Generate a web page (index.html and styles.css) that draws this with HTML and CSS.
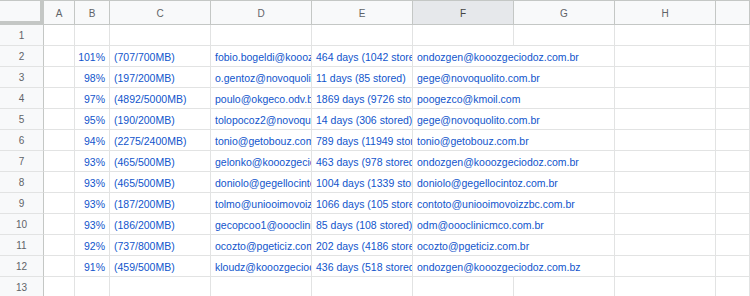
FILE: index.html
```html
<!DOCTYPE html>
<html lang="en">
<head>
  <meta charset="UTF-8" />
  <meta name="viewport" content="width=device-width, initial-scale=1.0" />
  <title>Storage usage</title>
  <link rel="stylesheet" href="styles.css">
</head>
<body>
  <div class="sheet">
    <!-- column headers -->
    <div class="corner"></div>
    <div class="col-head">A</div>
    <div class="col-head">B</div>
    <div class="col-head">C</div>
    <div class="col-head">D</div>
    <div class="col-head">E</div>
    <div class="col-head sel">F</div>
    <div class="col-head">G</div>
    <div class="col-head">H</div>
    <div class="col-head"></div>

    <!-- row 1 -->
    <div class="row-head">1</div>
    <div class="cell"></div><div class="cell"></div><div class="cell"></div><div class="cell"></div>
    <div class="cell"></div><div class="cell"></div><div class="cell"></div><div class="cell"></div><div class="cell"></div>

    <div class="row-head">2</div>
    <div class="cell"></div>
    <div class="cell num">101%</div>
    <div class="cell">(707/700MB)</div>
    <div class="cell">fobio.bogeldi@kooozgeciodoz.com.br</div>
    <div class="cell">464 days (1042 stored)</div>
    <div class="cell wide">ondozgen@kooozgeciodoz.com.br</div>
    <div class="cell"></div><div class="cell"></div>

    <div class="row-head">3</div>
    <div class="cell"></div>
    <div class="cell num">98%</div>
    <div class="cell">(197/200MB)</div>
    <div class="cell">o.gentoz@novoquolito.com.br</div>
    <div class="cell">11 days (85 stored)</div>
    <div class="cell wide">gege@novoquolito.com.br</div>
    <div class="cell"></div><div class="cell"></div>

    <div class="row-head">4</div>
    <div class="cell"></div>
    <div class="cell num">97%</div>
    <div class="cell">(4892/5000MB)</div>
    <div class="cell">poulo@okgeco.odv.br</div>
    <div class="cell">1869 days (9726 stored)</div>
    <div class="cell wide">poogezco@kmoil.com</div>
    <div class="cell"></div><div class="cell"></div>

    <div class="row-head">5</div>
    <div class="cell"></div>
    <div class="cell num">95%</div>
    <div class="cell">(190/200MB)</div>
    <div class="cell">tolopocoz2@novoquolito.com.br</div>
    <div class="cell">14 days (306 stored)</div>
    <div class="cell wide">gege@novoquolito.com.br</div>
    <div class="cell"></div><div class="cell"></div>

    <div class="row-head">6</div>
    <div class="cell"></div>
    <div class="cell num">94%</div>
    <div class="cell">(2275/2400MB)</div>
    <div class="cell">tonio@getobouz.com.br</div>
    <div class="cell">789 days (11949 stored)</div>
    <div class="cell wide">tonio@getobouz.com.br</div>
    <div class="cell"></div><div class="cell"></div>

    <div class="row-head">7</div>
    <div class="cell"></div>
    <div class="cell num">93%</div>
    <div class="cell">(465/500MB)</div>
    <div class="cell">gelonko@kooozgeciodoz.com.br</div>
    <div class="cell">463 days (978 stored)</div>
    <div class="cell wide">ondozgen@kooozgeciodoz.com.br</div>
    <div class="cell"></div><div class="cell"></div>

    <div class="row-head">8</div>
    <div class="cell"></div>
    <div class="cell num">93%</div>
    <div class="cell">(465/500MB)</div>
    <div class="cell">doniolo@gegellocintoz.com.br</div>
    <div class="cell">1004 days (1339 stored)</div>
    <div class="cell wide">doniolo@gegellocintoz.com.br</div>
    <div class="cell"></div><div class="cell"></div>

    <div class="row-head">9</div>
    <div class="cell"></div>
    <div class="cell num">93%</div>
    <div class="cell">(187/200MB)</div>
    <div class="cell">tolmo@uniooimovoizzbc.com.br</div>
    <div class="cell">1066 days (105 stored)</div>
    <div class="cell wide">contoto@uniooimovoizzbc.com.br</div>
    <div class="cell"></div><div class="cell"></div>

    <div class="row-head">10</div>
    <div class="cell"></div>
    <div class="cell num">93%</div>
    <div class="cell">(186/200MB)</div>
    <div class="cell">gecopcoo1@oooclinicmco.com.br</div>
    <div class="cell">85 days (108 stored)</div>
    <div class="cell wide">odm@oooclinicmco.com.br</div>
    <div class="cell"></div><div class="cell"></div>

    <div class="row-head">11</div>
    <div class="cell"></div>
    <div class="cell num">92%</div>
    <div class="cell">(737/800MB)</div>
    <div class="cell">ocozto@pgeticiz.com.br</div>
    <div class="cell">202 days (4186 stored)</div>
    <div class="cell wide">ocozto@pgeticiz.com.br</div>
    <div class="cell"></div><div class="cell"></div>

    <div class="row-head">12</div>
    <div class="cell"></div>
    <div class="cell num">91%</div>
    <div class="cell">(459/500MB)</div>
    <div class="cell">kloudz@kooozgeciodoz.com.br</div>
    <div class="cell">436 days (518 stored)</div>
    <div class="cell wide">ondozgen@kooozgeciodoz.com.bz</div>
    <div class="cell"></div><div class="cell"></div>

    <div class="row-head">13</div>
    <div class="cell"></div><div class="cell"></div><div class="cell"></div><div class="cell"></div>
    <div class="cell"></div><div class="cell"></div><div class="cell"></div><div class="cell"></div><div class="cell"></div>
  </div>
</body>
</html>
```

FILE: styles.css
```css
body { margin: 0; background: #fff; font-family: "Liberation Sans", Arial, sans-serif; overflow: hidden; }
.sheet { display: grid; grid-template-columns: 44px 31px 35px repeat(6, 101px) 1fr; grid-template-rows: 25px; grid-auto-rows: 21px; width: 750px; }
.sheet > div { box-sizing: border-box; overflow: hidden; white-space: nowrap; }
.corner { background: #f8f9fa; border-top: 1px solid #c4c7c5; border-right: 4px solid #c4c7c5; border-bottom: 4px solid #c4c7c5; }
.col-head { background: #f8f9fa; color: #5f6368; font-size: 10px; display: flex; align-items: center; justify-content: center; border-top: 1px solid #c4c7c5; border-right: 1px solid #c4c7c5; border-bottom: 1px solid #c4c7c5; padding-top: 1px; }
.col-head.sel { background: #e6e8eb; color: #444; }
.row-head { background: #f8f9fa; color: #5f6368; font-size: 10px; display: flex; align-items: center; justify-content: center; border-right: 1px solid #c4c7c5; border-bottom: 1px solid #e2e3e3; padding-top: 1px; }
.cell { color: #1155cc; font-size: 10.5px; display: flex; align-items: flex-end; padding: 0 3px 3px 4px; border-right: 1px solid #e2e3e3; border-bottom: 1px solid #e2e3e3; }
.num { justify-content: flex-end; padding-right: 4px; }
.wide { grid-column: span 2; }
```
